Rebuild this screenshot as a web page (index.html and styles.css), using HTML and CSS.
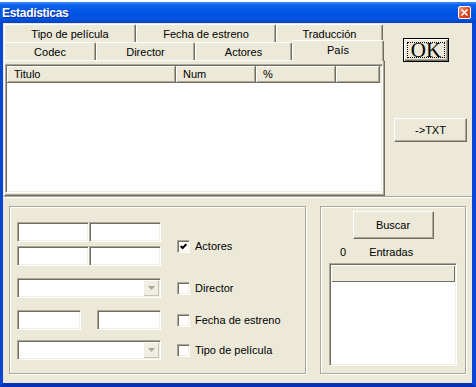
FILE: index.html
```html
<!DOCTYPE html>
<html lang="es">
<head>
    <meta charset="UTF-8">
    <meta name="viewport" content="width=device-width, initial-scale=1.0">
    <title>Estadísticas</title>
    <link rel="stylesheet" href="styles.css">
</head>
<body>
    <div class="window">
        <div class="top-strip"></div>
        <div class="title-bar">
            <span class="title-text">Estadísticas</span>
            <div class="close-btn">
                <svg width="9" height="9" viewBox="0 0 9 9"><path d="M1.5 1.5 L7.5 7.5 M7.5 1.5 L1.5 7.5" stroke="#fff" stroke-width="1.7" fill="none"/></svg>
            </div>
        </div>
        <div class="client">
            <div class="upper">
                <div class="tabs">
                    <div class="tab-row">
                        <div class="tab tab-tipo">Tipo de película</div>
                        <div class="tab tab-fecha">Fecha de estreno</div>
                        <div class="tab tab-trad">Traducción</div>
                    </div>
                    <div class="tab-row">
                        <div class="tab tab-codec">Codec</div>
                        <div class="tab tab-director">Director</div>
                        <div class="tab tab-actores">Actores</div>
                        <div class="tab tab-pais">País</div>
                    </div>
                    <div class="tab-panel">
                        <div class="list-view">
                            <div class="lv-header">
                                <div class="lv-col col-titulo">Titulo</div>
                                <div class="lv-col col-num">Num</div>
                                <div class="lv-col col-pct">%</div>
                                <div class="lv-col col-extra"></div>
                            </div>
                            <div class="lv-body"></div>
                        </div>
                    </div>
                </div>
                <div class="side-buttons">
                    <div class="btn btn-ok"><span>OK</span></div>
                    <div class="btn btn-txt">-&gt;TXT</div>
                </div>
            </div>
            <div class="lower">
                <div class="group group-filters">
                    <div class="filter-grid">
                        <div class="edit-pairs">
                            <div class="edit-row"><div class="edit w72"></div><div class="edit w72"></div></div>
                            <div class="edit-row"><div class="edit w72"></div><div class="edit w72"></div></div>
                        </div>
                        <div class="check check-first">
                            <span class="check-box">
                                <svg width="7" height="7" viewBox="0 0 7 7"><path d="M0.6 3 L2.6 5 L6.4 1.2" stroke="#000" stroke-width="2" fill="none"/></svg>
                            </span>
                            <span>Actores</span>
                        </div>
                        <div class="combo">
                            <div class="combo-btn"><svg width="7" height="4" viewBox="0 0 7 4"><polygon points="0,0 7,0 3.5,4" fill="#ACA899"/></svg></div>
                        </div>
                        <div class="check"><span class="check-box"></span><span>Director</span></div>
                        <div class="date-row"><div class="edit w64"></div><div class="edit w64"></div></div>
                        <div class="check"><span class="check-box"></span><span>Fecha de estreno</span></div>
                        <div class="combo">
                            <div class="combo-btn"><svg width="7" height="4" viewBox="0 0 7 4"><polygon points="0,0 7,0 3.5,4" fill="#ACA899"/></svg></div>
                        </div>
                        <div class="check"><span class="check-box"></span><span>Tipo de película</span></div>
                    </div>
                </div>
                <div class="group group-search">
                    <div class="btn btn-buscar">Buscar</div>
                    <div class="entries">
                        <span>0</span>
                        <span>Entradas</span>
                    </div>
                    <div class="list-box">
                        <div class="lb-header"></div>
                    </div>
                </div>
            </div>
        </div>
    </div>
</body>
</html>
```

FILE: styles.css
```css
* {
    margin: 0;
    padding: 0;
    box-sizing: border-box;
}
body {
    background-color: #fff;
    font-family: "Liberation Sans", Arial, sans-serif;
    font-size: 11px;
    color: #000;
}
.window {
    width: 476px;
    height: 387px;
    display: flex;
    flex-direction: column;
    overflow: hidden;
}
.top-strip {
    height: 2px;
    background-color: #fff;
}
/* title bar */
.title-bar {
    height: 21px;
    display: flex;
    align-items: center;
    justify-content: space-between;
    padding: 0 5px 0 2px;
    background: linear-gradient(#3B8DF8 0, #0B62EC 3px, #0056E6 10px, #0052E0 17px, #0043C6 21px);
}
.title-text {
    color: #fff;
    font-weight: bold;
    font-size: 12px;
    letter-spacing: -0.3px;
    text-shadow: 1px 1px 0 #0A2F9C;
}
.close-btn {
    width: 13px;
    height: 13px;
    border: 1px solid #fff;
    border-radius: 2px;
    background: linear-gradient(135deg, #F29A7E, #E0461E 55%, #C13A12);
    display: flex;
    align-items: center;
    justify-content: center;
}
.client {
    flex: 1;
    display: flex;
    flex-direction: column;
    background-color: #ECE9D8;
    border-left: 3px solid #0A46D6;
    border-right: 4px solid #0A46D6;
    border-bottom: 4px solid #0730B8;
}
/* upper part: tabs + buttons */
.upper {
    height: 174px;
    display: flex;
    border-bottom: 1px solid #ACA899;
    box-shadow: 0 1px 0 #fff;
}
.tabs {
    width: 381px;
    height: 172px;
    margin: 1px 0 0 1px;
    display: flex;
    flex-direction: column;
}
.tab-row {
    height: 18px;
    display: flex;
    align-items: flex-end;
}
.tab {
    height: 18px;
    display: flex;
    align-items: center;
    justify-content: center;
    background-color: #ECE9D8;
    border-top: 1px solid #fff;
    border-left: 1px solid #fff;
    border-right: 1px solid #716F64;
    border-radius: 2px 2px 0 0;
    box-shadow: inset -1px 0 0 #ACA899;
}
.tab-tipo { width: 132px; }
.tab-fecha { width: 140px; }
.tab-trad { width: 107px; }
.tab-codec { width: 92px; }
.tab-director { width: 99px; }
.tab-actores { width: 97px; }
.tab-pais {
    width: 92px;
    height: 21px;
    margin-bottom: -1px;
    padding-bottom: 2px;
    position: relative;
    z-index: 1;
}
.tab-panel {
    height: 136px;
    border: 1px solid;
    border-color: #fff #716F64 #716F64 #fff;
    box-shadow: inset -1px -1px 0 #ACA899;
    padding: 3px 1px 2px 0;
}
.list-view {
    height: 100%;
    display: flex;
    flex-direction: column;
    background-color: #fff;
    border: 1px solid;
    border-color: #ACA899 #fff #fff #ACA899;
    box-shadow: inset 1px 1px 0 #716F64, inset -1px -1px 0 #F1EFE2;
    padding: 1px;
}
.lv-header {
    height: 17px;
    display: flex;
    background-color: #ECE9D8;
}
.lv-col {
    height: 17px;
    display: flex;
    align-items: center;
    padding-left: 7px;
    border-right: 1px solid #716F64;
    border-bottom: 1px solid #716F64;
    box-shadow: inset 1px 1px 0 #fff, inset -1px -1px 0 #ACA899;
}
.col-titulo { width: 169px; }
.col-num { width: 80px; }
.col-pct { width: 80px; }
.col-extra { width: 44px; }
.lv-body {
    flex: 1;
}
/* buttons */
.btn {
    display: flex;
    align-items: center;
    justify-content: center;
    background-color: #ECE9D8;
    border: 1px solid;
    border-color: #fff #716F64 #716F64 #fff;
    box-shadow: inset -1px -1px 0 #ACA899;
}
.side-buttons {
    flex: 1;
    display: flex;
    flex-direction: column;
}
.btn-ok {
    width: 46px;
    height: 24px;
    margin: 15px 0 0 18px;
    padding: 3px;
    border: 1px solid #000;
    box-shadow: inset 1px 1px 0 #fff, inset -1px -1px 0 #716F64, inset -2px -2px 0 #ACA899;
    font-family: "Liberation Serif", "Times New Roman", serif;
    font-size: 21px;
}
.btn-ok span {
    flex: 1;
    align-self: stretch;
    display: flex;
    align-items: center;
    justify-content: center;
    border: 1px dotted #000;
    line-height: 1;
}
.btn-txt {
    width: 73px;
    height: 24px;
    margin: 56px 0 0 9px;
}
/* lower part: group boxes */
.lower {
    flex: 1;
    display: flex;
    gap: 14px;
    padding: 9px 6px 0 6px;
}
.group {
    height: 168px;
    border: 1px solid #ACA899;
    box-shadow: inset 1px 1px 0 #fff, 1px 1px 0 #fff;
}
.group-filters {
    width: 297px;
    padding: 15px 0 0 7px;
}
.filter-grid {
    display: grid;
    grid-template-columns: 144px auto;
    grid-template-rows: 44px 32px 32px 30px;
    column-gap: 16px;
    align-items: end;
}
.edit-pairs {
    display: flex;
    flex-direction: column;
    gap: 4px;
}
.edit-row,
.date-row {
    display: flex;
}
.date-row {
    gap: 16px;
}
.edit,
.combo,
.check-box,
.list-box {
    background-color: #fff;
    border: 1px solid;
    border-color: #ACA899 #fff #fff #ACA899;
    box-shadow: inset 1px 1px 0 #716F64, inset -1px -1px 0 #F1EFE2;
}
.edit { height: 20px; }
.w72 { width: 72px; }
.w64 { width: 64px; }
.combo {
    height: 20px;
    padding: 1px;
    display: flex;
    justify-content: flex-end;
}
.combo-btn {
    width: 16px;
    height: 16px;
    display: flex;
    align-items: center;
    justify-content: center;
    background-color: #F0EEE4;
    box-shadow: inset 1px 1px 0 #fff, inset -1px -1px 0 #C6C3B3;
}
.check {
    height: 20px;
    display: flex;
    align-items: center;
    gap: 5px;
}
.check-first {
    align-self: center;
    margin-top: 4px;
}
.check-box {
    width: 13px;
    height: 13px;
    display: flex;
    align-items: center;
    justify-content: center;
}
.group-search {
    width: 146px;
    display: flex;
    flex-direction: column;
    align-items: center;
}
.btn-buscar {
    width: 81px;
    height: 28px;
    margin-top: 4px;
}
.entries {
    align-self: stretch;
    display: flex;
    gap: 23px;
    padding-left: 19px;
    margin-top: 7px;
    line-height: 13px;
}
.list-box {
    width: 128px;
    height: 103px;
    margin-top: 4px;
    padding: 1px;
}
.lb-header {
    height: 17px;
    background-color: #ECE9D8;
    box-shadow: inset 1px 1px 0 #fff, inset -1px -1px 0 #716F64;
}
```
